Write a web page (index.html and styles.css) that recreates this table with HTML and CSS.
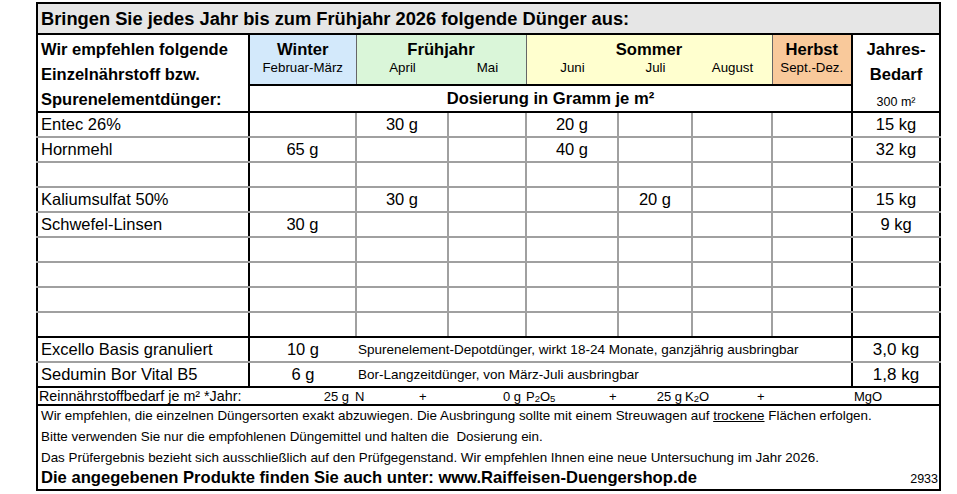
FILE: index.html
```html
<!DOCTYPE html>
<html lang="de">
<head>
<meta charset="utf-8">
<title>Düngeplan</title>
<link rel="stylesheet" href="styles.css">
</head>
<body>
<div class="sheet">
<table class="plan">
<colgroup>
<col class="c-name"><col class="c-win"><col class="c-apr"><col class="c-mai"><col class="c-jun"><col class="c-jul"><col class="c-aug"><col class="c-herb"><col class="c-jahr">
</colgroup>
<tbody>
<tr class="r-title"><td colspan="9" class="title">Bringen Sie jedes Jahr bis zum Frühjahr 2026 folgende Dünger aus:</td></tr>
<tr class="r-head">
  <td rowspan="2" class="lh"><div>Wir empfehlen folgende</div><div>Einzelnährstoff bzw.</div><div class="lh-last">Spurenelementdünger:</div></td>
  <td class="season winter"><div class="sname">Winter</div><div class="months one"><span>Februar-März</span></div></td>
  <td colspan="2" class="season spring"><div class="sname">Frühjahr</div><div class="months spr"><span>April</span><span>Mai</span></div></td>
  <td colspan="3" class="season summer"><div class="sname">Sommer</div><div class="months sum"><span>Juni</span><span>Juli</span><span>August</span></div></td>
  <td class="season autumn"><div class="sname">Herbst</div><div class="months one"><span>Sept.-Dez.</span></div></td>
  <td rowspan="2" class="jahr"><div class="jl">Jahres-</div><div class="jl">Bedarf</div><div class="area">300 m²</div></td>
</tr>
<tr class="r-dos"><td colspan="7" class="dos">Dosierung in Gramm je m²</td></tr>

<tr class="data"><td class="name">Entec 26%</td><td></td><td>30 g</td><td></td><td>20 g</td><td></td><td></td><td></td><td class="need">15 kg</td></tr>
<tr class="data"><td class="name">Hornmehl</td><td>65 g</td><td></td><td></td><td>40 g</td><td></td><td></td><td></td><td class="need">32 kg</td></tr>
<tr class="data"><td class="name"></td><td></td><td></td><td></td><td></td><td></td><td></td><td></td><td class="need"></td></tr>
<tr class="data"><td class="name">Kaliumsulfat 50%</td><td></td><td>30 g</td><td></td><td></td><td>20 g</td><td></td><td></td><td class="need">15 kg</td></tr>
<tr class="data"><td class="name">Schwefel-Linsen</td><td>30 g</td><td></td><td></td><td></td><td></td><td></td><td></td><td class="need">9 kg</td></tr>
<tr class="data"><td class="name"></td><td></td><td></td><td></td><td></td><td></td><td></td><td></td><td class="need"></td></tr>
<tr class="data"><td class="name"></td><td></td><td></td><td></td><td></td><td></td><td></td><td></td><td class="need"></td></tr>
<tr class="data"><td class="name"></td><td></td><td></td><td></td><td></td><td></td><td></td><td></td><td class="need"></td></tr>
<tr class="data last"><td class="name"></td><td></td><td></td><td></td><td></td><td></td><td></td><td></td><td class="need"></td></tr>

<tr class="trace"><td class="name">Excello Basis granuliert</td><td class="tw">10 g</td><td colspan="6" class="desc">Spurenelement-Depotdünger, wirkt 18-24 Monate, ganzjährig ausbringbar</td><td class="need big">3,0 kg</td></tr>
<tr class="trace last"><td class="name">Sedumin Bor Vital B5</td><td class="tw">6 g</td><td colspan="6" class="desc">Bor-Langzeitdünger, von März-Juli ausbringbar</td><td class="need big">1,8 kg</td></tr>

<tr class="r-rein"><td colspan="9" class="rein">
  <div class="reinrow">
    <span class="seg pair s1"><span class="rl">Reinnährstoffbedarf je m² *Jahr:</span><span>25 g</span></span>
    <span class="seg s2">N</span>
    <span class="seg pair s3"><span>+</span><span>0 g</span></span>
    <span class="seg s4">P<sub>2</sub>O<sub>5</sub></span>
    <span class="seg pair s5"><span>+</span><span>25 g</span></span>
    <span class="seg s6">K<sub>2</sub>O</span>
    <span class="seg pair s7"><span>+</span></span>
    <span class="seg s8">MgO</span>
  </div>
</td></tr>

<tr class="r-notes"><td colspan="9" class="notes">
  <p class="note first">Wir empfehlen, die einzelnen Düngersorten exakt abzuwiegen. Die Ausbringung sollte mit einem Streuwagen auf <u>trockene</u> Flächen erfolgen.</p>
  <p class="note">Bitte verwenden Sie nur die empfohlenen Düngemittel und halten die&nbsp; Dosierung ein.</p>
  <p class="note">Das Prüfergebnis bezieht sich ausschließlich auf den Prüfgegenstand. Wir empfehlen Ihnen eine neue Untersuchung im Jahr 2026.</p>
  <div class="shop"><span class="shoptext">Die angegebenen Produkte finden Sie auch unter: www.Raiffeisen-Duengershop.de</span><span class="code">2933</span></div>
</td></tr>
</tbody>
</table>
<div class="pagefoot">Seite 2 von 2 - Auftrag: G20510 - Hofmann, Technik / Tech</div>
</div>
</body>
</html>
```
FILE: styles.css
```css
* { box-sizing: border-box; }
body {
  margin: 0;
  background: #fff;
  color: #000;
  font-family: "Liberation Sans", Arial, sans-serif;
}
.sheet {
  width: 903px;
  margin: 2px 0 0 36px;
}
table.plan {
  width: 903px;
  table-layout: fixed;
  border-collapse: collapse;
  border: 2px solid #000;
}
td {
  padding: 0;
  border: none;
  vertical-align: middle;
}
.c-name { width: 212px; }
.c-win { width: 107px; }
.c-apr { width: 92px; }
.c-mai { width: 78px; }
.c-jun { width: 92px; }
.c-jul { width: 74px; }
.c-aug { width: 80px; }
.c-herb { width: 80px; }
.c-jahr { width: 88px; }

/* title */
.r-title { height: 31px; }
.title {
  background: #e6e6e6;
  border-bottom: 2px solid #000;
  font-weight: bold;
  font-size: 18.3px;
  line-height: 22px;
  padding: 0 0 0 3px;
}

/* header */
.r-head { height: 51px; }
.r-dos { height: 27px; }
.lh {
  border-right: 2px solid #000;
  border-bottom: 2px solid #000;
  font-weight: bold;
  font-size: 16.5px;
  line-height: 25px;
  padding: 2px 0 0 3px;
  vertical-align: top;
}
.lh-last { height: 21px; }
.season {
  border-bottom: 2px solid #000;
  border-right: 1px solid #666;
  text-align: center;
  vertical-align: top;
  padding-top: 5px;
}
.autumn { border-right: 2px solid #000; }
.winter { background: #d3e9fb; }
.spring { background: #daf6d9; }
.summer { background: #ffffcf; }
.autumn { background: #f9c99b; }
.sname {
  font-weight: bold;
  font-size: 16.6px;
  line-height: 20px;
}
.months {
  font-size: 13.3px;
  line-height: 16px;
  display: grid;
}
.months.one { grid-template-columns: 1fr; }
.months.spr { grid-template-columns: 92px 78px; }
.months.sum { grid-template-columns: 92px 74px 80px; }
.jahr {
  border-bottom: 2px solid #000;
  text-align: center;
  vertical-align: top;
  padding-top: 2px;
}
.jl {
  font-weight: bold;
  font-size: 16.6px;
  line-height: 25px;
}
.area {
  font-size: 12.5px;
  line-height: 20px;
  padding-top: 5px;
  height: 23px;
}
.dos {
  border-right: 2px solid #000;
  border-bottom: 2px solid #000;
  text-align: center;
  font-weight: bold;
  font-size: 16.6px;
  line-height: 19px;
}

/* data rows */
.data, .trace { height: 25px; }
.data td, .trace td {
  font-size: 16.5px;
  line-height: 19px;
  text-align: center;
  border-bottom: 2px solid #a0a0a0;
  border-right: 2px solid #a0a0a0;
}
.data td.name, .trace td.name {
  text-align: left;
  padding-left: 3px;
  border-right-color: #000;
}
.data td:nth-child(8) { border-right-color: #000; }
.data td.need, .trace td.need { border-right: none; }
.data.last td, .trace.last td { border-bottom-color: #000; }
.trace td.tw { border-right: none; }
.trace td.desc {
  text-align: left;
  font-size: 13.5px;
  padding-left: 2px;
  border-right-color: #000;
}
.trace td.big { font-size: 17px; }

/* reinnaehrstoff */
.r-rein { height: 18px; }
.rein {
  border-bottom: 2px solid #000;
  font-size: 13px;
  padding-left: 1px;
  line-height: 13px;
}
.reinrow { display: flex; align-items: baseline; white-space: nowrap; height: 13px; }
.seg { display: block; }
.seg.pair { display: flex; justify-content: space-between; align-items: baseline; }
.rl { font-size: 14.3px; }
.s1 { width: 310px; }
.s2 { width: 70px; padding-left: 6px; }
.s3 { width: 102px; }
.s4 { width: 88px; padding-left: 5px; }
.s5 { width: 73px; }
.s6 { width: 75px; padding-left: 3px; }
.s7 { width: 97px; }
.rein sub { font-size: 9.5px; vertical-align: -1px; line-height: 0; }

/* notes */
.notes {
  padding: 0 0 0 3px;
  vertical-align: top;
}
.note {
  margin: 0;
  font-size: 13.4px;
  line-height: 21px;
}
.note.first { line-height: 19px; margin-bottom: 1px; }
.shop {
  display: flex;
  justify-content: space-between;
  align-items: baseline;
  padding-right: 1px;
  line-height: 19px;
}
.shoptext { font-weight: bold; font-size: 16.6px; }
.code { font-size: 12.5px; }

.pagefoot {
  text-align: center;
  font-size: 11px;
  line-height: 14px;
  padding-left: 10px;
}
```
